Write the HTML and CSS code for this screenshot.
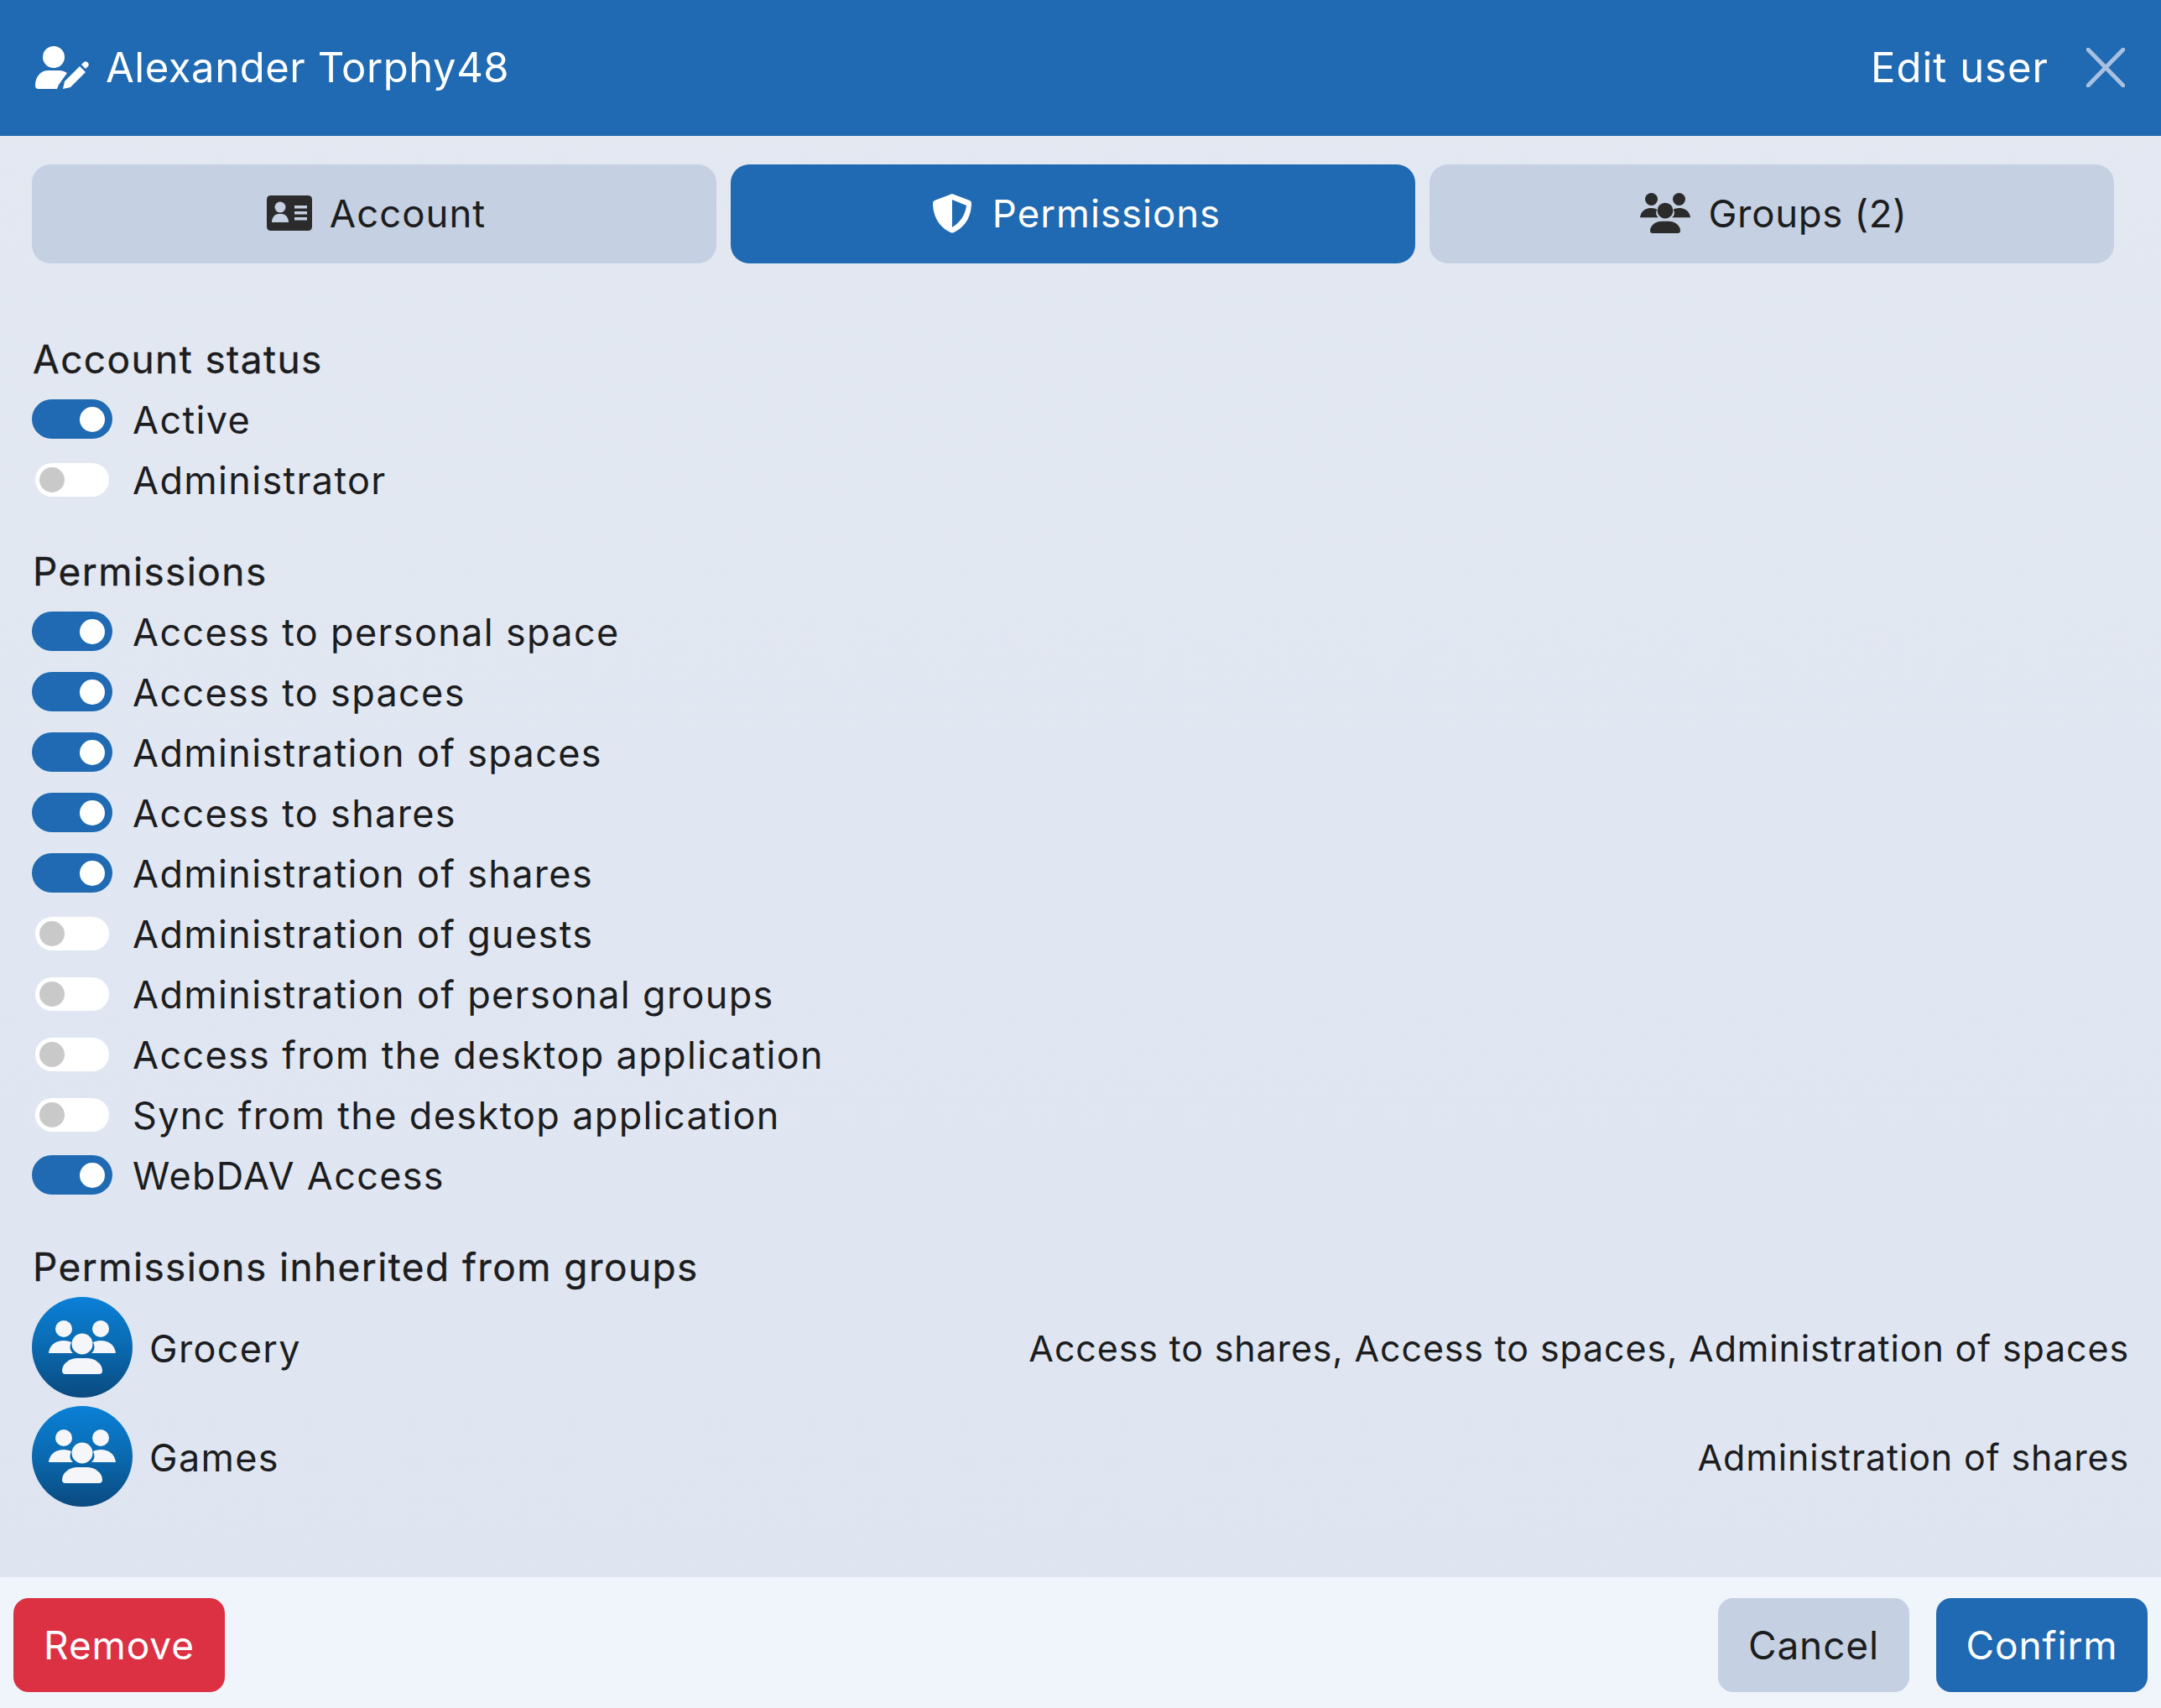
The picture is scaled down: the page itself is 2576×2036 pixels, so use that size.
FILE: index.html
```html
<!DOCTYPE html>
<html lang="en">
<head>
<meta charset="utf-8">
<title>Edit user</title>
<link rel="stylesheet" href="styles.css">
</head>
<body>
<svg class="defs" aria-hidden="true">
  <symbol id="people" viewBox="0 0 80 64">
    <circle cx="18" cy="10" r="10"/>
    <circle cx="62" cy="10" r="10"/>
    <circle cx="40" cy="28" r="12.5"/>
    <path d="M0 39C1 29 9 24 18 24c4 0 7 1 9 2-1 2-1.500 4-1.500 6 0 3 1.500 5 3.500 7Z"/>
    <path d="M80 39C79 29 71 24 62 24c-4 0-7 1-9 2 1 2 1.500 4 1.500 6 0 3-1.500 5-3.500 7Z"/>
    <path d="M16 60c0-9 10-15 18-15h12c8 0 18 6 18 15q0 4-4 4H20q-4 0-4-4Z"/>
  </symbol>
</svg>
<div class="dialog">
  <header class="topbar">
    <div class="title">
      <svg class="user-icon" viewBox="0 0 64 51"><ellipse cx="22" cy="13" rx="13" ry="13"/><path d="M0 47c0-11 7-18 15-18h13c4 0 7 1 10 3L28 46l-2 5H4q-4 0-4-4Z"/><path d="M33 51l2-9 18-18 7 7-18 18Z"/><path d="M55 22l3-3q2-1.500 4 0l1 1q1.500 2 0 4l-3 3Z"/></svg>
      <span>Alexander Torphy48</span>
    </div>
    <div class="mode">
      <span>Edit user</span>
      <svg class="close" viewBox="0 0 46 47"><path d="M2 2L44 45M44 2L2 45"/></svg>
    </div>
  </header>

  <nav class="tabs">
    <div class="tab tab-account">
      <svg class="tab-icon id" viewBox="0 0 54 42"><path class="ink" d="M5 0h44q5 0 5 5v32q0 5-5 5H5q-5 0-5-5V5q0-5 5-5Z"/><circle class="cut" cx="16" cy="14" r="6.500"/><path class="cut" d="M6 32c0-6 4-10 8-10h4c4 0 8 4 8 10Z"/><path class="cut" d="M33 12h15v3.500H33ZM33 19h15v3.500H33ZM33 26h15v3.500H33Z"/></svg>
      <span>Account</span>
    </div>
    <div class="tab tab-permissions active">
      <svg class="tab-icon shield" viewBox="0 0 46 47"><path d="M23 0 44 8q2 1 2 3c0 14-6 28-21 35q-2 1-4 0C6 39 0 25 0 11q0-2 2-3Z"/><path class="shield-cut" d="M23 7 40 14C39 24 33 34 23 40Z"/></svg>
      <span>Permissions</span>
    </div>
    <div class="tab tab-groups">
      <svg class="tab-icon people"><use href="#people"/></svg>
      <span>Groups (2)</span>
    </div>
  </nav>

  <main class="content">
    <section class="section">
      <h2>Account status</h2>
      <div class="row"><span class="toggle on"></span><span>Active</span></div>
      <div class="row"><span class="toggle"></span><span>Administrator</span></div>
    </section>
    <section class="section">
      <h2>Permissions</h2>
      <div class="row"><span class="toggle on"></span><span>Access to personal space</span></div>
      <div class="row"><span class="toggle on"></span><span>Access to spaces</span></div>
      <div class="row"><span class="toggle on"></span><span>Administration of spaces</span></div>
      <div class="row"><span class="toggle on"></span><span>Access to shares</span></div>
      <div class="row"><span class="toggle on"></span><span>Administration of shares</span></div>
      <div class="row"><span class="toggle"></span><span>Administration of guests</span></div>
      <div class="row"><span class="toggle"></span><span>Administration of personal groups</span></div>
      <div class="row"><span class="toggle"></span><span>Access from the desktop application</span></div>
      <div class="row"><span class="toggle"></span><span>Sync from the desktop application</span></div>
      <div class="row"><span class="toggle on"></span><span>WebDAV Access</span></div>
    </section>
    <section class="section">
      <h2>Permissions inherited from groups</h2>
      <div class="groups">
        <div class="group">
          <span class="avatar"><svg class="avatar-icon"><use href="#people"/></svg></span>
          <span class="group-name">Grocery</span>
          <span class="group-perms">Access to shares, Access to spaces, Administration of spaces</span>
        </div>
        <div class="group">
          <span class="avatar"><svg class="avatar-icon"><use href="#people"/></svg></span>
          <span class="group-name">Games</span>
          <span class="group-perms">Administration of shares</span>
        </div>
      </div>
    </section>
  </main>

  <footer class="footer">
    <button class="btn danger">Remove</button>
    <div class="footer-right">
      <button class="btn neutral">Cancel</button>
      <button class="btn primary">Confirm</button>
    </div>
  </footer>
</div>
</body>
</html>
```
FILE: styles.css
```css
* { box-sizing: border-box; }
html, body { margin: 0; padding: 0; }
body {
  width: 2576px;
  height: 2036px;
  overflow: hidden;
  font-family: Inter, "Liberation Sans", sans-serif;
  color: #1c1d20;
  background: linear-gradient(180deg, #e3e8f1 0%, #e1e7f2 50%, #dfe5f0 100%);
}
.defs { display: none; }
.dialog { display: flex; flex-direction: column; height: 2036px; }

.topbar {
  height: 162px;
  flex: none;
  display: flex;
  align-items: center;
  justify-content: space-between;
  padding: 0 43px 2px 42px;
  background: #1f6ab2;
  color: #fff;
  font-size: 49px;
  letter-spacing: 1px;
}
.title, .mode { display: flex; align-items: center; }
.title { gap: 20px; letter-spacing: 0.55px; }
.mode { gap: 45px; }
.user-icon { width: 64px; height: 51px; fill: #fff; flex: none; }
.close { width: 46px; height: 47px; fill: none; stroke: #a9c0e0; stroke-width: 5px; stroke-linecap: round; flex: none; }

.tabs {
  flex: none;
  display: grid;
  grid-template-columns: repeat(3, 1fr);
  gap: 17px;
  padding: 34px 56px 0 38px;
}
.tab {
  height: 118px;
  display: flex;
  align-items: center;
  justify-content: center;
  gap: 24px;
  padding-bottom: 2px;
  border-radius: 22px;
  background: #c5d0e2;
  color: #1c1d20;
  font-size: 45.5px;
  letter-spacing: 1px;
}
.tab-account { gap: 21px; padding-left: 5px; }
.tab-permissions { gap: 25px; padding-left: 9px; }
.tab-groups { gap: 21px; padding-left: 5px; letter-spacing: 0.7px; }
.tab.active { background: #1f6ab2; color: #fff; }
.tab-icon { flex: none; fill: currentColor; }
.tab-icon.id { width: 54px; height: 42px; }
.tab-icon.id .ink { fill: #2b2b2b; }
.tab-icon.id .cut { fill: #c5d0e2; }
.tab-icon.shield { width: 46px; height: 47px; }
.tab-icon.shield .shield-cut { fill: #1f6ab2; }
.tab-icon.people { width: 60px; height: 48px; color: #2b2b2b; }

.content {
  flex: 1 1 auto;
  display: flex;
  flex-direction: column;
  gap: 37px;
  padding: 78px 38px 0 38px;
  font-size: 45px;
  letter-spacing: 1.33px;
}
h2 {
  margin: 0;
  height: 72px;
  display: flex;
  align-items: center;
  padding-left: 1px;
  font-size: 46px;
  font-weight: 400;
  letter-spacing: 1.4px;
  -webkit-text-stroke: 0.35px #1c1d20;
}
.row { height: 72px; display: flex; align-items: center; gap: 24px; }
.toggle {
  position: relative;
  flex: none;
  width: 88px;
  height: 40px;
  margin: 0 4px;
  border-radius: 20px;
  background: #fff;
}
.toggle::after {
  content: "";
  position: absolute;
  top: 5px;
  left: 5px;
  width: 30px;
  height: 30px;
  border-radius: 50%;
  background: #c9c9c9;
}
.toggle.on {
  width: 96px;
  height: 47px;
  margin: 0 0 2px;
  border-radius: 24px;
  background: #1f6ab2;
}
.toggle.on::after {
  top: 9px;
  left: 57px;
  background: #fff;
}
.groups { display: flex; flex-direction: column; gap: 10px; }
.group { height: 120px; display: flex; align-items: center; }
.avatar {
  flex: none;
  width: 120px;
  height: 120px;
  margin-right: 20px;
  border-radius: 50%;
  display: flex;
  align-items: center;
  justify-content: center;
  background: linear-gradient(180deg, #0a80d8 0%, #0a6cb4 45%, #0a4a80 100%);
}
.avatar-icon { width: 80px; height: 64px; fill: #f4f6fa; }
.group-name { flex: none; padding-top: 2px; }
.group-perms { margin-left: auto; padding-top: 2px; font-size: 43px; letter-spacing: 0.85px; }

.footer {
  flex: none;
  height: 156px;
  display: flex;
  align-items: flex-start;
  justify-content: space-between;
  padding: 25px 16px 0;
  background: #f0f4fb;
}
.footer-right { display: flex; gap: 32px; }
.btn {
  height: 112px;
  border: 0;
  border-radius: 18px;
  padding: 0;
  font-family: inherit;
  font-size: 46px;
  letter-spacing: 0.9px;
}
.btn.danger { width: 252px; background: #dc3043; color: #fff; }
.btn.neutral { width: 228px; background: #c5d0e2; color: #1c1d20; }
.btn.primary { width: 252px; background: #1f6ab2; color: #fff; }
```
